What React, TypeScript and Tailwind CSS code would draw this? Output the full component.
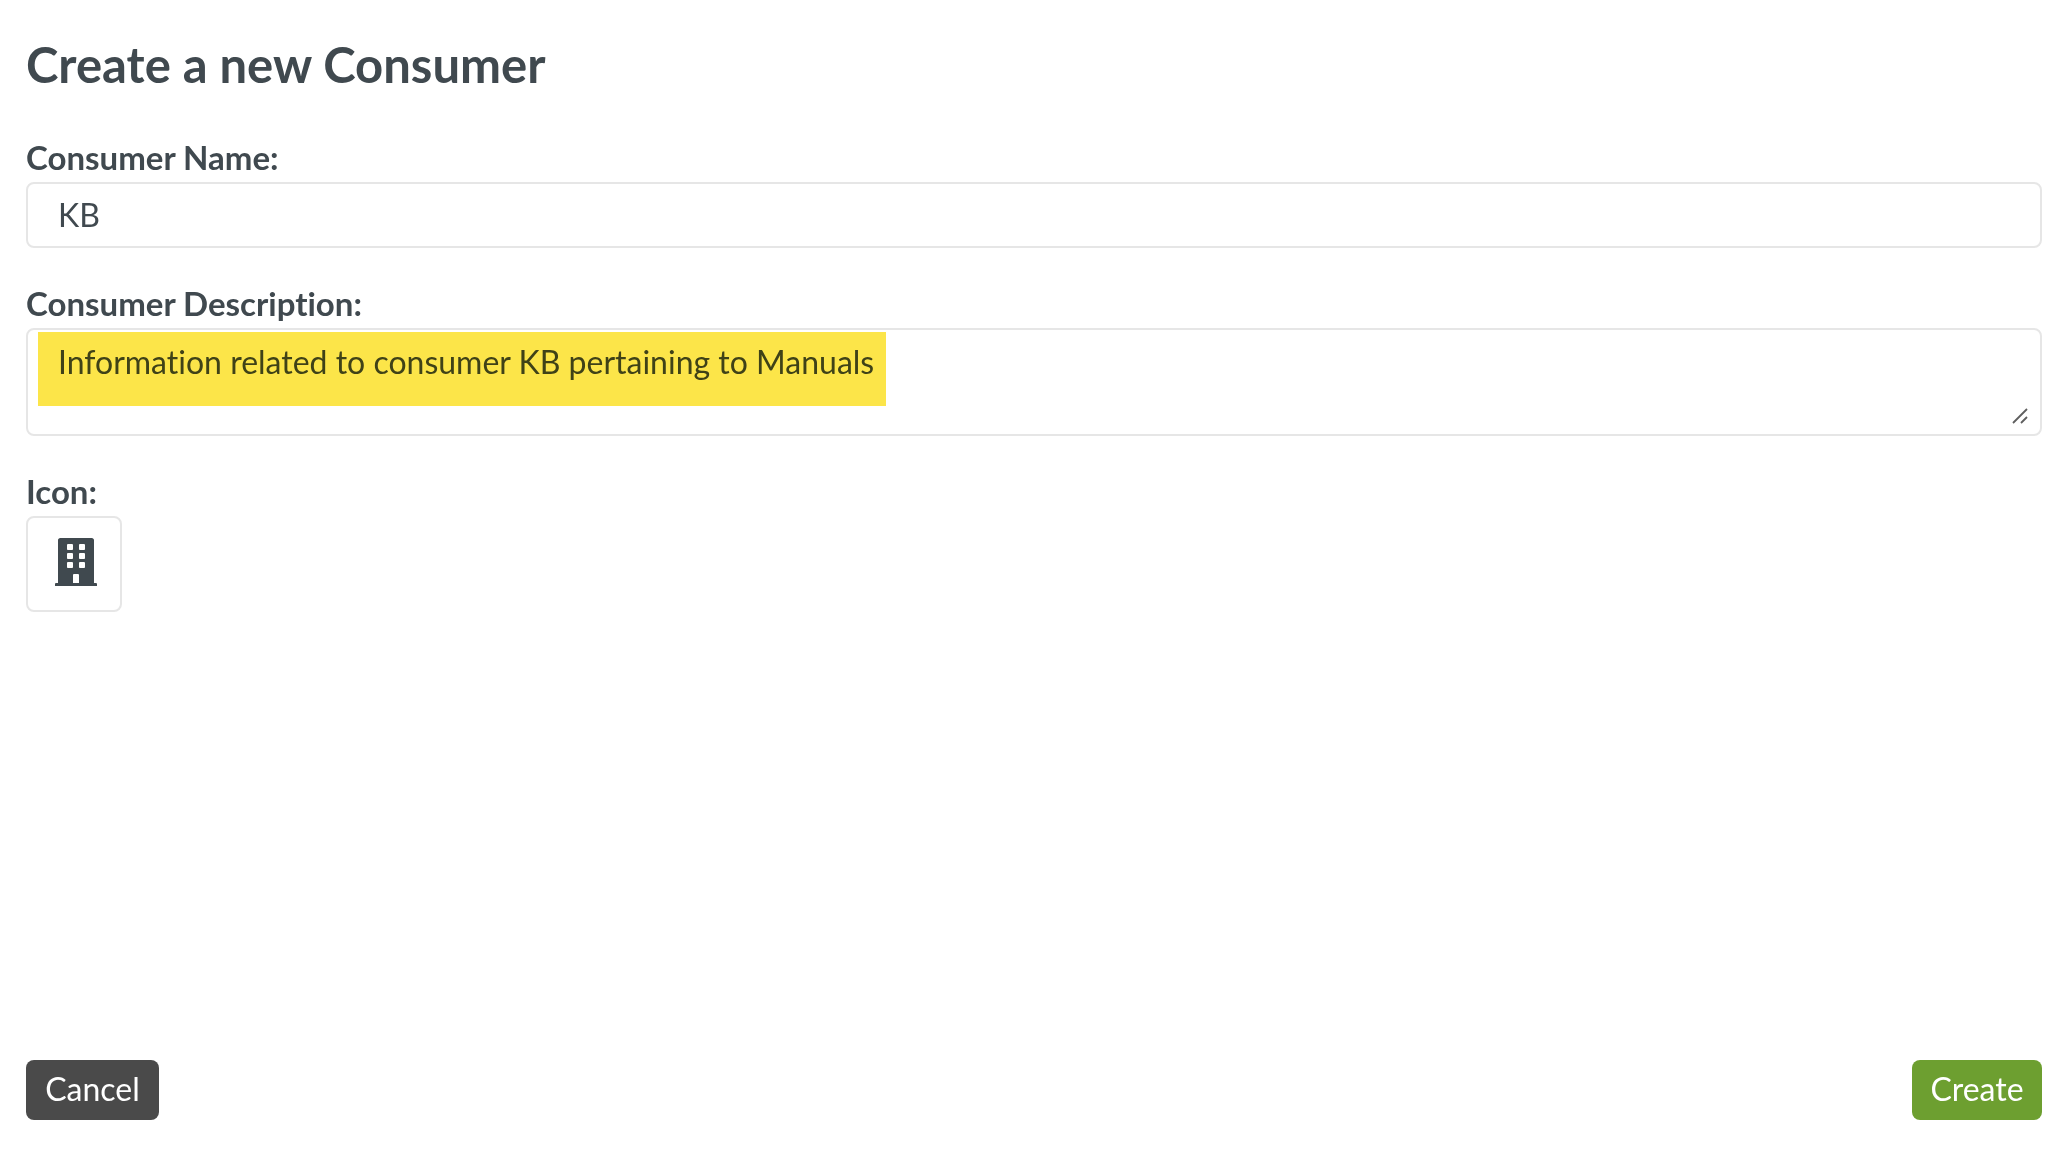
import React, { useState } from 'react';
import { FaBuilding } from 'react-icons/fa';

const labelClass = 'block text-[33px] leading-[38px] font-bold';
const fieldClass =
  'block w-full rounded-lg border-2 border-[#e6e6e6] bg-white px-[30px] text-[32px] leading-10 outline-none focus:border-[#c4c9cc]';
const buttonClass = 'h-[60px] rounded-lg pb-[2px] text-center text-[32px] leading-10 text-white';

const ResizeHandle: React.FC = () => (
  <svg
    className="pointer-events-none absolute right-[14px] bottom-3 h-4 w-4"
    viewBox="0 0 16 16"
    fill="none"
    stroke="#5f5f5f"
    strokeWidth="1.8"
    aria-hidden="true"
  >
    <path d="M1 15 15 1M9 15l6-6" />
  </svg>
);

export default function App() {
  const [name, setName] = useState('KB');
  const [description, setDescription] = useState(
    'Information related to consumer KB pertaining to Manuals'
  );

  return (
    <form
      onSubmit={(e) => e.preventDefault()}
      className="flex min-h-screen flex-col bg-white px-[26px] pt-8 pb-[30px] font-['Lato',sans-serif] text-[#40494f] [font-variant-ligatures:none]"
    >
      <h1 className="text-[49px] leading-[64px] font-bold">Create a new Consumer</h1>

      {/* Name */}
      <div className="mt-[42px]">
        <label htmlFor="name" className={labelClass}>
          Consumer Name:
        </label>
        <input
          id="name"
          type="text"
          value={name}
          onChange={(e) => setName(e.target.value)}
          className={`${fieldClass} mt-[6px] h-[66px] pb-[2px]`}
        />
      </div>

      {/* Description */}
      <div className="mt-9">
        <label htmlFor="description" className={labelClass}>
          Consumer Description:
        </label>
        <div className="relative mt-[6px]">
          <textarea
            id="description"
            value={description}
            onChange={(e) => setDescription(e.target.value)}
            className={`${fieldClass} h-[108px] resize-none pt-3`}
          />
          <div className="pointer-events-none absolute top-1 left-3 h-[74px] w-[848px] bg-[#fce549] mix-blend-multiply" />
          <ResizeHandle />
        </div>
      </div>

      {/* Icon */}
      <div className="mt-9">
        <label htmlFor="icon" className={labelClass}>
          Icon:
        </label>
        <button
          id="icon"
          type="button"
          className="mt-[6px] flex h-24 w-24 rounded-lg border-2 border-[#e6e6e6] pt-5 pl-[27px]"
        >
          <FaBuilding className="h-12 w-[42px]" />
        </button>
      </div>

      <div className="mt-auto flex items-center justify-between">
        <button type="button" className={`${buttonClass} w-[133px] bg-[#4a4a4a]`}>
          Cancel
        </button>
        <button type="submit" className={`${buttonClass} w-[130px] bg-[#6d9f30]`}>
          Create
        </button>
      </div>
    </form>
  );
}
